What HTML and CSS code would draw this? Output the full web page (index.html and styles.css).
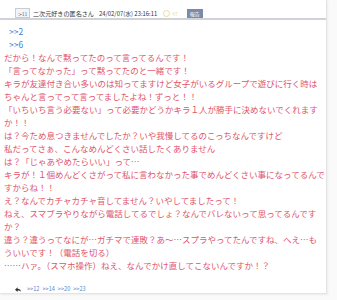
FILE: index.html
```html
<!DOCTYPE html>
<html lang="ja">
<head>
<meta charset="utf-8">
<link rel="stylesheet" href="styles.css">
</head>
<body>
<div class="card">
  <div class="head">
    <span class="num">≻11</span>
    <span class="name">二次元好きの匿名さん</span>
    <span class="date">24/02/07(水) 23:16:11</span>
    <span class="like"><span class="ring"></span>47</span>
    <span class="report">報告</span>
  </div>
  <div class="body">
    <div class="anchors">
      <a class="anc">&gt;&gt;2</a>
      <a class="anc">&gt;&gt;6</a>
    </div>
    <div class="text">だから！なんで黙ってたのって言ってるんです！<br>「言ってなかった」って黙ってたのと一緒です！<br>キラが友達付き合い多いのは知ってますけど女子がいるグループで遊びに行く時は<br>ちゃんと言ってって言ってましたよね！ずっと！！<br>「いちいち言う必要ない」って必要かどうかキラ１人が勝手に決めないでくれます<br>か！！<br>は？今ため息つきませんでしたか？いや我慢してるのこっちなんですけど<br>私だってさぁ、こんなめんどくさい話したくありません<br>は？「じゃあやめたらいい」って…<br>キラが！１個めんどくさがって私に言わなかった事でめんどくさい事になってるんで<br>すからね！！<br>え？なんでカチャカチャ音してません？いやしてましたって！<br>ねえ、スマブラやりながら電話してるでしょ？なんでバレないって思ってるんです<br>か？<br>違う？違うってなにが…ガチマで連敗？あ〜…スプラやってたんですね、へえ…も<br>ういいです！（電話を切る）<br>……ハァ。（スマホ操作）ねえ、なんでかけ直してこないんですか！？</div>
  </div>
  <div class="foot">
    <svg class="reply" width="6" height="5" viewBox="0 0 6 5"><path d="M0 2.8 L2.6 0.3 V1.7 C4.5 1.7 5.8 2.8 6 4.8 C5.2 3.7 4.2 3.4 2.6 3.4 V4.9 Z" fill="#333"/></svg>
    <a class="ref">&gt;&gt;12</a>
    <a class="ref">&gt;&gt;14</a>
    <a class="ref">&gt;&gt;20</a>
    <a class="ref">&gt;&gt;23</a>
  </div>
</div>
</body>
</html>
```
FILE: styles.css
```css
html, body {
  margin: 0;
  padding: 0;
  background: #fafafa;
}
body {
  font-family: "Noto Sans CJK JP", "Noto Sans", sans-serif;
  width: 337px;
  height: 300px;
  overflow: hidden;
}
.card {
  width: 327px;
  height: 294px;
  background: #fff;
  border-right: 1px solid #e4e4e4;
  border-bottom: 1px solid #e4e4e4;
  box-shadow: 1px 1px 2px rgba(0,0,0,0.06);
  box-sizing: border-box;
  display: flex;
  flex-direction: column;
}
.head {
  display: flex;
  align-items: center;
  height: 17px;
  margin-top: 8px;
  padding-left: 15px;
  border-bottom: 2px solid #cfd2d6;
  font-size: 6px;
  color: #444;
}
.num {
  display: inline-flex;
  align-items: center;
  justify-content: center;
  width: 13px;
  height: 8px;
  border: 1px solid #c8ccd4;
  background: #f2f4f8;
  color: #5a6a8a;
  font-size: 5px;
  margin-right: 3px;
}
.name {
  color: #333;
  font-size: 6.1px;
  margin-right: 5px;
}
.date {
  color: #333;
  font-size: 5.9px;
  margin-right: 6px;
}
.like {
  display: inline-flex;
  align-items: center;
  color: #eed9a8;
  font-size: 5px;
  margin-right: 9px;
}
.ring {
  width: 5px;
  height: 5px;
  border: 1px solid #f0d9a0;
  border-radius: 50%;
  margin-right: 2px;
}
.report {
  background: #7b8aa6;
  color: #fff;
  font-size: 5px;
  padding: 1px 3px;
  line-height: 7px;
}
.body {
  padding-top: 5px;
  padding-left: 4px;
}
.anchors {
  display: flex;
  flex-direction: column;
  padding-left: 5px;
}
.anc {
  color: #3f7fd6;
  font-size: 8.5px;
  line-height: 13px;
  height: 13px;
}
.text {
  color: #e0546a;
  font-size: 8.5px;
  line-height: 13px;
  white-space: nowrap;
}
.foot {
  display: flex;
  align-items: center;
  gap: 3px;
  margin-top: 13px;
  padding-left: 15px;
  height: 8px;
}
.reply {
  margin-right: 3px;
}
.ref {
  color: #5b86c9;
  font-size: 5.6px;
}
```
